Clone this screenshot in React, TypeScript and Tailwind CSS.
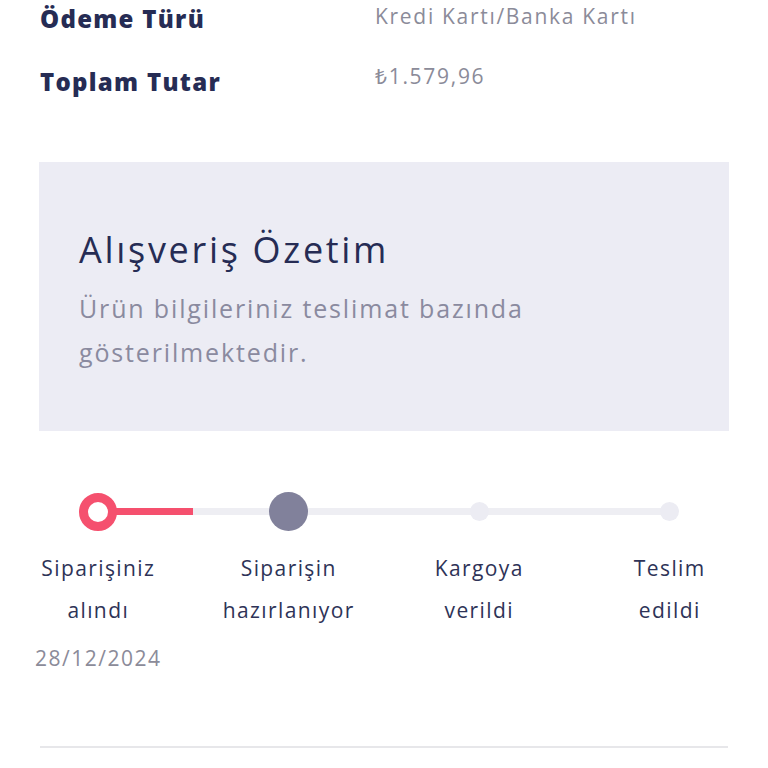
import React from 'react';

const steps = [
  { top: 'Siparişiniz', bottom: 'alındı', date: '28/12/2024', state: 'done' },
  { top: 'Siparişin', bottom: 'hazırlanıyor', state: 'current' },
  { top: 'Kargoya', bottom: 'verildi', state: 'todo' },
  { top: 'Teslim', bottom: 'edildi', state: 'todo' },
];

function Dot({ state }: { state: string }) {
  if (state === 'done') {
    return <div className="w-[38px] h-[38px] rounded-full border-[9px] border-[#f5506e] bg-white" />;
  }
  if (state === 'current') {
    return <div className="w-[39px] h-[39px] rounded-full bg-[#81819b]" />;
  }
  return <div className="w-[19px] h-[19px] rounded-full bg-[#ececf3]" />;
}

export default function App() {
  return (
    <div className="w-[768px] h-[768px] overflow-hidden bg-white text-[#262c54] font-['Open_Sans',sans-serif]">
      {/* Order info rows */}
      <div className="px-10 pt-0">
        <div className="flex h-[38px] items-center">
          <span className="w-[335px] text-[24px] font-extrabold tracking-[1.3px]">Ödeme Türü</span>
          <span className="text-[21px] tracking-[1.7px] text-[#8b8b99] -mt-[4px]">Kredi Kartı/Banka Kartı</span>
        </div>
        <div className="flex h-[28px] items-center mt-[26px]">
          <span className="w-[335px] text-[24px] font-extrabold tracking-[1.3px] mt-[8px]">Toplam Tutar</span>
          <span className="text-[21px] tracking-[1.7px] text-[#8b8b99] -mt-[2px]">₺1.579,96</span>
        </div>
      </div>

      {/* Summary card */}
      <div className="mx-[39px] mt-[70px] h-[269px] bg-[#ececf4] px-10 pt-[68px]">
        <h2 className="text-[36px] leading-[40px] font-normal tracking-[2.7px]">Alışveriş Özetim</h2>
        <p className="mt-[16px] w-[580px] text-[25px] leading-[44px] tracking-[1.85px] text-[#8a8a9f]">
          Ürün bilgileriniz teslimat bazında<br />gösterilmektedir.
        </p>
      </div>

      {/* Stepper */}
      <div className="relative mt-[61px] px-[3px]">
        <div className="absolute left-[98px] right-[98px] top-[16px] h-[7px] bg-[#eeeef3]" />
        <div className="absolute left-[98px] w-[95px] top-[16px] h-[7px] bg-[#f5506e]" />
        <div className="relative grid grid-cols-4">
          {steps.map((s) => (
            <div key={s.top} className="flex flex-col items-center">
              <div className="h-[39px] flex items-center justify-center">
                <Dot state={s.state} />
              </div>
              <div className="mt-[16px] text-center text-[21px] leading-[42px] tracking-[1.4px] text-[#2e3357]">
                <div>{s.top}</div>
                <div>{s.bottom}</div>
              </div>
              {s.date && <div className="mt-[12px] text-[21px] leading-[30px] tracking-[1.5px] text-[#8b8b99]">{s.date}</div>}
            </div>
          ))}
        </div>
      </div>

      {/* Divider */}
      <div className="mx-10 mt-[73px] h-[2px] bg-[#e7e7ea]" />
    </div>
  );
}
